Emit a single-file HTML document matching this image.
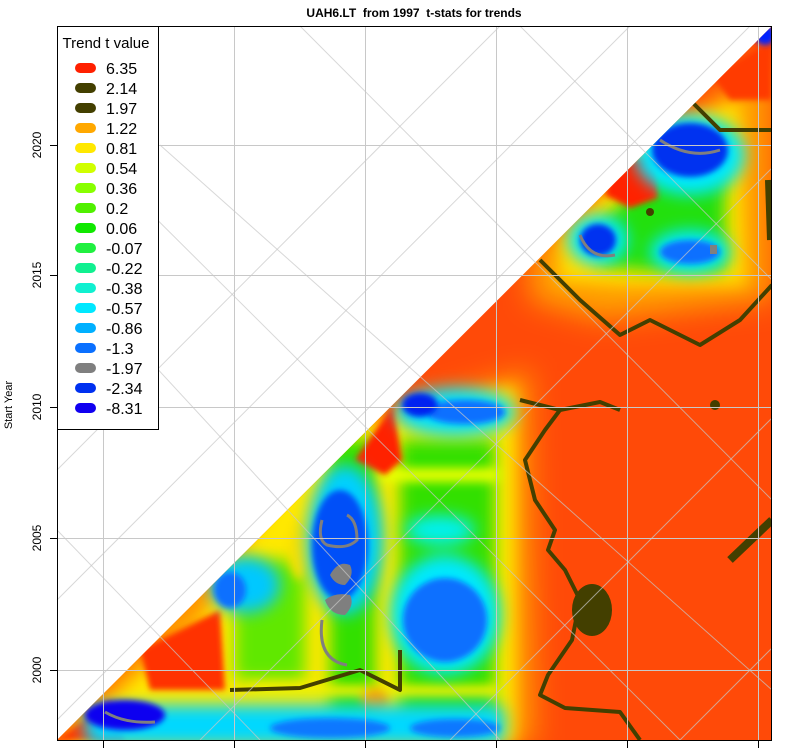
<!DOCTYPE html>
<html><head><meta charset="utf-8"><style>
html,body{margin:0;padding:0;background:#fff;}
svg{display:block;font-family:"Liberation Sans",Arial,sans-serif;}
</style></head><body>
<svg width="788" height="752" viewBox="0 0 788 752" xmlns="http://www.w3.org/2000/svg">
<defs>
<clipPath id="tri"><polygon points="57,740 772,26 772,740"/></clipPath>
<filter id="b8" x="-50%" y="-50%" width="200%" height="200%"><feGaussianBlur stdDeviation="8"/></filter>
<filter id="b5" x="-50%" y="-50%" width="200%" height="200%"><feGaussianBlur stdDeviation="5"/></filter>
<filter id="b3" x="-50%" y="-50%" width="200%" height="200%"><feGaussianBlur stdDeviation="3"/></filter>
<filter id="b14" x="-50%" y="-50%" width="200%" height="200%"><feGaussianBlur stdDeviation="14"/></filter>
</defs>
<text x="414" y="17" text-anchor="middle" font-size="12" font-weight="bold" xml:space="preserve">UAH6.LT  from 1997  t-stats for trends</text>
<g clip-path="url(#tri)">
<rect x="57" y="26" width="715" height="714" fill="#ff4a08"/>
<g filter="url(#b14)">
<polygon points="300,440 530,370 535,745 50,745" fill="#ff9a00"/>
<polygon points="530,250 772,50 772,300 600,320 530,300" fill="#ffa000"/>
</g>
<g filter="url(#b8)">
<polygon points="310,440 515,385 515,745 60,745 200,620" fill="#ffe800"/>
<polygon points="560,240 680,120 740,100 745,285 620,285 560,280" fill="#ffe000"/>
</g>
<!-- green: vertical stripes -->
<g filter="url(#b8)">
<rect x="330" y="440" width="45" height="280" fill="#30e000"/>
<rect x="400" y="440" width="95" height="280" fill="#30e000"/>
<rect x="235" y="560" width="70" height="120" fill="#60e800"/>
<polygon points="600,225 680,140 725,130 725,270 640,270 600,265" fill="#20e010"/>
</g>
<!-- yellow horizontal stripes in middle column -->
<g filter="url(#b5)">
<rect x="380" y="468" width="120" height="14" fill="#e8ff00"/>
<rect x="250" y="685" width="250" height="12" fill="#f0f000"/>
<ellipse cx="375" cy="700" rx="14" ry="12" fill="#ffa000"/>
<ellipse cx="300" cy="550" rx="12" ry="30" fill="#f8e000"/>
</g>
<!-- red patches -->
<g filter="url(#b3)">
<polygon points="57,740 110,700 125,740" fill="#ff3a00"/>
<polygon points="140,650 220,610 225,690 150,690" fill="#ff3000"/>
<polygon points="355,460 393,405 402,460 385,475" fill="#ff2000"/>
<polygon points="612,165 655,155 658,198 630,208 605,195" fill="#ff2000"/>
<polygon points="712,76 772,40 772,100 730,100" fill="#ff3a00"/>
</g>
<!-- cyan -->
<g filter="url(#b8)">
<ellipse cx="445" cy="615" rx="55" ry="60" fill="#00e8ff"/>
<ellipse cx="345" cy="540" rx="38" ry="75" fill="#00d0ff"/>
<ellipse cx="455" cy="412" rx="60" ry="24" fill="#00e0ff"/>
<rect x="85" y="705" width="420" height="40" rx="12" fill="#00d8ff"/>
<ellipse cx="245" cy="585" rx="35" ry="28" fill="#00c8ff"/>
<ellipse cx="690" cy="155" rx="55" ry="40" fill="#00e8ff"/>
<ellipse cx="598" cy="240" rx="30" ry="25" fill="#00e8ff"/>
<ellipse cx="690" cy="252" rx="40" ry="22" fill="#00e8ff"/>
<ellipse cx="440" cy="530" rx="35" ry="15" fill="#00f0f0"/>
</g>
<!-- blue -->
<g filter="url(#b3)">
<ellipse cx="445" cy="620" rx="42" ry="42" fill="#0a70ff"/>
<ellipse cx="340" cy="545" rx="28" ry="55" fill="#0050f8"/>
<ellipse cx="465" cy="412" rx="40" ry="12" fill="#0a70ff"/>
<ellipse cx="420" cy="405" rx="18" ry="12" fill="#0020f0"/>
<ellipse cx="125" cy="715" rx="40" ry="15" fill="#1000f0"/>
<ellipse cx="330" cy="728" rx="60" ry="10" fill="#0a78ff"/>
<ellipse cx="455" cy="728" rx="45" ry="9" fill="#0a78ff"/>
<ellipse cx="690" cy="150" rx="38" ry="27" fill="#0030f0"/>
<ellipse cx="598" cy="240" rx="18" ry="16" fill="#0030f0"/>
<ellipse cx="690" cy="252" rx="30" ry="12" fill="#0a70ff"/>
<ellipse cx="765" cy="35" rx="10" ry="10" fill="#0020ff"/>
<ellipse cx="230" cy="590" rx="16" ry="18" fill="#0a70ff"/>
</g>
<!-- gray -->
<g fill="#7f7f7f">
<path d="M330 575 q8-15 20-10 q5 10 -5 20 q-10 0 -15 -10z"/>
<path d="M325 600 q10-8 25-5 q5 10 -5 20 q-15 0 -20 -15z"/>
<rect x="710" y="245" width="7" height="9"/>
</g>
<g fill="none" stroke="#7f7f7f" stroke-width="3">
<path d="M322 520 q-5 20 5 25 q20 5 30 -5 q0 -20 -10 -25"/>
<path d="M322 620 q-5 40 25 45"/>
<path d="M580 235 q10 25 35 20"/>
<path d="M660 140 q30 20 60 10"/>
<path d="M105 712 q20 12 50 10"/>
</g>
<!-- olive contours -->
<g fill="none" stroke="#433f00" stroke-width="4" stroke-linejoin="round">
<path d="M520 400 L560 410 L600 402 L620 410"/>
<path d="M560 410 L545 430 L525 460 L535 500 L555 530 L548 550 L565 570 L580 600 L572 640 L548 675 L540 695 L565 708 L620 712 L640 740"/>
<path d="M540 260 L580 300 L620 335 L650 320 L700 345 L740 320 L772 285"/>
<path d="M230 690 L300 688 L360 670 L400 690 L400 650"/>
<path d="M690 100 L720 130 L772 130"/>
<path d="M770 180 L772 240" stroke-width="10"/>
<path d="M730 560 L772 520" stroke-width="8"/>
</g>
<g fill="#433f00">
<ellipse cx="592" cy="610" rx="20" ry="26"/>
<circle cx="715" cy="405" r="5"/>
<circle cx="650" cy="212" r="4"/>
</g>
</g>
<!-- grid -->
<g stroke="#c8c8c8" stroke-width="1" fill="none">
<path d="M103.5 26V740M234.5 26V740M365.5 26V740M496.5 26V740M627.5 26V740M758.5 26V740"/>
<path d="M57 145.5H772M57 275.5H772M57 407.5H772M57 538.5H772M57 670.5H772"/>
<path d="M57 530L260 740M57 260L500 740M57 120L680 740M160 145L772 690M300 26L772 500M520 26L772 280" opacity="0.7"/>
<path d="M57 720L750 26M57 600L630 26M57 470L500 26M200 740L772 168M450 740L772 418M680 740L772 648" opacity="0.7"/>
</g>
<rect x="57.5" y="26.5" width="714" height="714" fill="none" stroke="#000" stroke-width="1"/>
<g stroke="#000"><path d="M50 145.5H57M50 275.5H57M50 407.5H57M50 538.5H57M50 670.5H57"/>
<path d="M103.5 741V748M234.5 741V748M365.5 741V748M496.5 741V748M627.5 741V748M758.5 741V748"/></g>
<g font-size="12" text-anchor="middle">
<text transform="translate(41,145) rotate(-90)">2020</text>
<text transform="translate(41,275) rotate(-90)">2015</text>
<text transform="translate(41,407) rotate(-90)">2010</text>
<text transform="translate(41,538) rotate(-90)">2005</text>
<text transform="translate(41,670) rotate(-90)">2000</text>
<text transform="translate(12,405) rotate(-90)" font-size="11">Start Year</text>
</g>
<rect x="57.5" y="26.5" width="101" height="403" fill="#fff" stroke="#000"/>
<text x="106" y="48" text-anchor="middle" font-size="15">Trend t value</text>
<g font-size="16">
<g transform="translate(0,68)"><rect x="75" y="-5" width="21" height="10" rx="5" fill="#ff2000"/><text x="106" y="6">6.35</text></g>
<g transform="translate(0,88)"><rect x="75" y="-5" width="21" height="10" rx="5" fill="#433f00"/><text x="106" y="6">2.14</text></g>
<g transform="translate(0,108)"><rect x="75" y="-5" width="21" height="10" rx="5" fill="#433f00"/><text x="106" y="6">1.97</text></g>
<g transform="translate(0,128)"><rect x="75" y="-5" width="21" height="10" rx="5" fill="#ffa800"/><text x="106" y="6">1.22</text></g>
<g transform="translate(0,148)"><rect x="75" y="-5" width="21" height="10" rx="5" fill="#ffe800"/><text x="106" y="6">0.81</text></g>
<g transform="translate(0,168)"><rect x="75" y="-5" width="21" height="10" rx="5" fill="#d0ff00"/><text x="106" y="6">0.54</text></g>
<g transform="translate(0,188)"><rect x="75" y="-5" width="21" height="10" rx="5" fill="#88ff00"/><text x="106" y="6">0.36</text></g>
<g transform="translate(0,208)"><rect x="75" y="-5" width="21" height="10" rx="5" fill="#50f000"/><text x="106" y="6">0.2</text></g>
<g transform="translate(0,228)"><rect x="75" y="-5" width="21" height="10" rx="5" fill="#10e800"/><text x="106" y="6">0.06</text></g>
<g transform="translate(0,248)"><rect x="75" y="-5" width="21" height="10" rx="5" fill="#20f040"/><text x="106" y="6">-0.07</text></g>
<g transform="translate(0,268)"><rect x="75" y="-5" width="21" height="10" rx="5" fill="#10f090"/><text x="106" y="6">-0.22</text></g>
<g transform="translate(0,288)"><rect x="75" y="-5" width="21" height="10" rx="5" fill="#10f0d0"/><text x="106" y="6">-0.38</text></g>
<g transform="translate(0,308)"><rect x="75" y="-5" width="21" height="10" rx="5" fill="#00e8ff"/><text x="106" y="6">-0.57</text></g>
<g transform="translate(0,328)"><rect x="75" y="-5" width="21" height="10" rx="5" fill="#00b0ff"/><text x="106" y="6">-0.86</text></g>
<g transform="translate(0,348)"><rect x="75" y="-5" width="21" height="10" rx="5" fill="#0a70ff"/><text x="106" y="6">-1.3</text></g>
<g transform="translate(0,368)"><rect x="75" y="-5" width="21" height="10" rx="5" fill="#7f7f7f"/><text x="106" y="6">-1.97</text></g>
<g transform="translate(0,388)"><rect x="75" y="-5" width="21" height="10" rx="5" fill="#0030f0"/><text x="106" y="6">-2.34</text></g>
<g transform="translate(0,408)"><rect x="75" y="-5" width="21" height="10" rx="5" fill="#1000f0"/><text x="106" y="6">-8.31</text></g>
</g>
</svg>
</body></html>
